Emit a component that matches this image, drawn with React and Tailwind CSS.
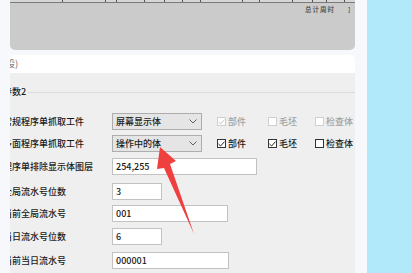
import React from 'react';

const headerCells = [53, 43, 11, 28, 20, 18, 18, 42, 17, 33, 20, 14, 18];

const rows = [
	{ label: '全局流水号位数', value: '3', width: 'w-[50px]', mt: 'mt-[8px]' },
	{ label: '当前全局流水号', value: '001', width: 'w-[116px]', mt: 'mt-[5px]' },
	{ label: '当日流水号位数', value: '6', width: 'w-[50px]', mt: 'mt-[6px]' },
	{ label: '当前当日流水号', value: '000001', width: 'w-[117px]', mt: 'mt-[7px]' },
];

const Chevron = () => (
	<svg width="8" height="5" viewBox="0 0 8 5" className="ml-auto mr-[4px]">
		<polyline points="0.5,0.5 4,4 7.5,0.5" fill="none" stroke="#606060" strokeWidth="1" />
	</svg>
);

const Check = ({ checked, disabled, label, className }) => (
	<div className={`flex items-center ${className}`}>
		<div
			className={`w-[9px] h-[9px] border flex items-center justify-center bg-white ${
				disabled ? 'border-[#cfcfcf]' : 'border-[#333333]'
			}`}>
			{checked && (
				<svg width="7" height="6" viewBox="0 0 7 6">
					<polyline
						points="0.5,3 2.6,5 6.5,0.6"
						fill="none"
						stroke={disabled ? '#c4c4c4' : '#222222'}
						strokeWidth="1"
					/>
				</svg>
			)}
		</div>
		<span className={`ml-[2px] ${disabled ? 'text-[#a3a3a3]' : 'text-[#1a1a1a]'}`}>{label}</span>
	</div>
);

const Label = ({ children }) => (
	<div className="ml-[-7px] w-[109px] shrink-0 whitespace-nowrap text-[#1a1a1a]">{children}</div>
);

export default function App() {
	return (
		<div
			className="relative flex w-[412px] h-[273px] overflow-hidden bg-[#f7f8fc] text-[9px] leading-[12px] font-medium"
			style={{ fontFamily: '"Noto Sans CJK SC", "Noto Sans", sans-serif' }}>
			{/* left strip */}
			<div className="w-[10px] shrink-0 bg-[#f7f8fc]" />

			{/* main column */}
			<div className="w-[345px] shrink-0 flex flex-col overflow-hidden">
				<div className="h-[50px] shrink-0 bg-[#cbcbcb] rounded-b-[5px] flex flex-col">
					<div className="h-[3px] flex bg-[#d6d6d6] border-b border-[#7a7a7a]">
						{headerCells.map((w, i) => (
							<div key={i} className="h-full border-r border-[#555555]" style={{ width: w }} />
						))}
					</div>
					<div className="flex items-center mt-[2px] text-[6.5px] leading-[8px] text-[#444444] tracking-[1px]">
						<span className="ml-[295px]">总计周时</span>
						<span className="ml-[13px]">]</span>
					</div>
				</div>

				<div className="h-[5px] shrink-0" />

				<div className="h-[18px] shrink-0 bg-white rounded-t-[5px] flex items-center">
					<span className="ml-[-4px] text-[#8c8283]">设)</span>
				</div>

				{/* settings panel */}
				<div className="flex-1 bg-[#efefef] pt-[13px]">
					<div className="flex items-center h-[12px]">
						<span className="ml-[-7px] text-[#1a1a1a]">参数2</span>
						<div className="flex-1 ml-[2px] h-px bg-[#dcdcdc]" />
					</div>

					<div className="flex items-center h-[17px] mt-[15px]">
						<Label>常规程序单抓取工件</Label>
						<div className="w-[90px] h-[17px] shrink-0 flex items-center bg-[#e5e5e5] border border-[#adadad] pl-[3px]">
							<span className="text-[#1a1a1a]">屏幕显示体</span>
							<Chevron />
						</div>
						<Check checked disabled label="部件" className="ml-[15px] w-[51px]" />
						<Check disabled label="毛坯" className="w-[47px]" />
						<Check disabled label="检查体" />
					</div>

					<div className="flex items-center h-[17px] mt-[5px]">
						<Label>多面程序单抓取工件</Label>
						<div className="w-[90px] h-[17px] shrink-0 flex items-center bg-[#e5e5e5] border border-[#adadad] pl-[3px]">
							<span className="text-[#1a1a1a]">操作中的体</span>
							<Chevron />
						</div>
						<Check checked label="部件" className="ml-[15px] w-[51px]" />
						<Check checked label="毛坯" className="w-[47px]" />
						<Check label="检查体" />
					</div>

					<div className="flex items-center h-[17px] mt-[6px]">
						<Label>程序单排除显示体图层</Label>
						<div className="w-[145px] h-[17px] shrink-0 flex items-center bg-white border border-[#c2c2c2] pl-[3px] text-[#1a1a1a]">
							254,255
						</div>
					</div>

					{rows.map((row) => (
						<div key={row.label} className={`flex items-center h-[17px] ${row.mt}`}>
							<Label>{row.label}</Label>
							<div
								className={`${row.width} h-[17px] shrink-0 flex items-center bg-white border border-[#c2c2c2] pl-[3px] text-[#1a1a1a]`}>
								{row.value}
							</div>
						</div>
					))}
				</div>
			</div>

			{/* right strips */}
			<div className="w-[12px] shrink-0 bg-[#f7f8fc]" />
			<div className="flex-1 bg-[#b1e9fb]" />

			{/* red annotation arrow */}
			<svg
				className="absolute left-0 top-0 pointer-events-none"
				width="412"
				height="273"
				viewBox="0 0 412 273">
				<polygon
					points="160,147 176,161 170,164 194,234 164,168 157,169"
					fill="#f03f3f"
				/>
			</svg>
		</div>
	);
}
